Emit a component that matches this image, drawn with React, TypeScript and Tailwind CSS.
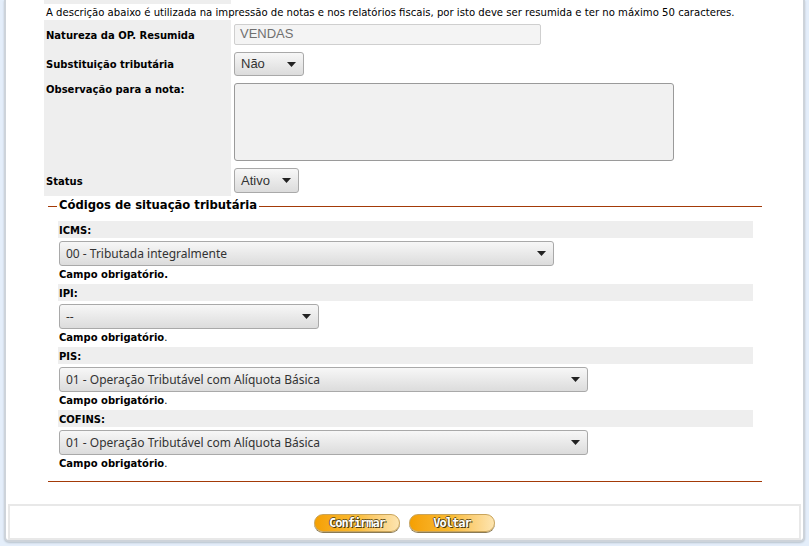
const LABEL = "font-['DejaVu_Sans',sans-serif] text-[10px] font-bold text-black";

type Cst = { label: string; value: string; width: string; boldDot: boolean };

const CST_ROWS: Cst[] = [
  { label: 'ICMS:', value: '00 - Tributada integralmente', width: 'w-[495px]', boldDot: true },
  { label: 'IPI:', value: '--', width: 'w-[260px]', boldDot: false },
  { label: 'PIS:', value: '01 - Operação Tributável com Alíquota Básica', width: 'w-[529px]', boldDot: false },
  { label: 'COFINS:', value: '01 - Operação Tributável com Alíquota Básica', width: 'w-[529px]', boldDot: false },
];

function Arrow() {
  return (
    <svg width="9" height="5" viewBox="0 0 9 5" className="shrink-0">
      <path d="M0 0h9L4.5 5z" fill="#222" />
    </svg>
  );
}

function Select({ value, className, font }: { value: string; className: string; font: string }) {
  return (
    <div
      className={`flex items-center justify-between rounded-[3px] border border-[#a9a9a9] bg-gradient-to-b from-[#f7f7f7] to-[#dcdcdc] pl-[6px] pr-[7px] text-[#333] ${font} ${className}`}
    >
      <span>{value}</span>
      <Arrow />
    </div>
  );
}

function PillButton({ children }: { children: string }) {
  return (
    <div className="flex h-[18px] w-[86px] items-center justify-center rounded-full border border-[#c9a45a] bg-gradient-to-r from-[#f5a000] via-[#f9bb30] to-[#fde5b0] shadow-[0_1px_0_#8a7a55]">
      <span className="font-['DejaVu_Sans_Mono',monospace] text-[12px] font-bold tracking-[-1px] text-white [text-shadow:1px_1px_0_#4a3a10,-1px_0_0_#6a5520,0_-1px_0_#6a5520]">
        {children}
      </span>
    </div>
  );
}

export default function App() {
  return (
    <div className="h-[546px] w-[809px] overflow-hidden bg-[#e4eefa]">
      <div className="ml-[4px] flex h-[542px] w-[801px] flex-col rounded-b-[5px] border-x-2 border-b-2 border-[#cdd3da] bg-white shadow-[0_1px_2px_#b8c2cc]">
        {/* top strip left over from previous row */}
        <div className="ml-[38px] h-[4px] w-[187px] bg-[#eeeeee]" />
        <p className="ml-[40px] mt-[2px] h-[14px] font-['DejaVu_Sans',sans-serif] text-[10.1px] leading-[14px] text-black">
          A descrição abaixo é utilizada na impressão de notas e nos relatórios fiscais, por isto deve ser resumida e ter no máximo 50 caracteres.
        </p>

        {/* main form */}
        <div className="ml-[38px] flex flex-col">
          <div className="flex h-[28px]">
            <div className={`flex w-[187px] items-center bg-[#eeeeee] pl-[2px] pt-[3px] ${LABEL}`}>Natureza da OP. Resumida</div>
            <div className="flex items-center pl-[3px]">
              <div className="flex h-[21px] w-[307px] items-center rounded-[2px] border border-[#cfcfcf] bg-[#f4f4f4] px-[5px] font-['Liberation_Sans',sans-serif] text-[13px] text-[#707070]">
                VENDAS
              </div>
            </div>
          </div>
          <div className="flex h-[29px]">
            <div className={`flex w-[187px] items-center bg-[#eeeeee] pl-[2px] pt-[3px] ${LABEL}`}>Substituição tributária</div>
            <div className="flex items-center pl-[3px] pt-[3px]">
              <Select value="Não" className="h-[24px] w-[70px]" font="font-['Liberation_Sans',sans-serif] text-[13px]" />
            </div>
          </div>
          <div className="flex h-[89px]">
            <div className={`w-[187px] bg-[#eeeeee] pl-[2px] pt-[5px] ${LABEL}`}>Observação para a nota:</div>
            <div className="pl-[3px] pt-[6px]">
              <div className="h-[78px] w-[440px] rounded-[3px] border border-[#9a9a9a] bg-[#f1f1f1]" />
            </div>
          </div>
          <div className="flex h-[30px]">
            <div className={`flex w-[187px] items-center bg-[#eeeeee] pl-[2px] pt-[1px] ${LABEL}`}>Status</div>
            <div className="flex items-start pl-[3px] pt-[2px]">
              <Select value="Ativo" className="h-[25px] w-[65px]" font="font-['Liberation_Sans',sans-serif] text-[13px]" />
            </div>
          </div>
        </div>

        {/* fieldset */}
        <div className="ml-[42px] mt-[3px] w-[714px]">
          <div className="flex h-[14px] items-center">
            <div className="h-px w-[9px] bg-[#a33a08]" />
            <span className="px-[2px] font-['DejaVu_Sans',sans-serif] text-[11.6px] font-bold text-black">Códigos de situação tributária</span>
            <div className="h-px flex-1 bg-[#a33a08]" />
          </div>
          <div className="ml-[10px] mr-[9px] mt-[8px] flex flex-col gap-[4px]">
            {CST_ROWS.map((row) => (
              <div key={row.label} className="flex flex-col">
                <div className={`flex h-[17px] items-center bg-[#eeeeee] pl-[1px] pt-[1px] ${LABEL}`}>{row.label}</div>
                <Select
                  value={row.value}
                  className={`mt-[3px] ml-[1px] h-[25px] ${row.width}`}
                  font="font-['Noto_Sans',sans-serif] text-[12px]"
                />
                <div className={`flex h-[14px] items-center pl-[1px] pt-[3px] ${LABEL}`}>
                  Campo obrigatório
                  <span className={row.boldDot ? '' : 'font-normal'}>.</span>
                </div>
              </div>
            ))}
          </div>
          <div className="mt-[12px] h-px bg-[#a33a08]" />
        </div>

        {/* footer buttons */}
        <div className="mx-[2px] mt-auto flex h-[36px] items-center justify-center gap-[9px] border-2 border-[#e8e8e8] pt-[1px]">
          <PillButton>Confirmar</PillButton>
          <PillButton>Voltar</PillButton>
        </div>
      </div>
    </div>
  );
}
